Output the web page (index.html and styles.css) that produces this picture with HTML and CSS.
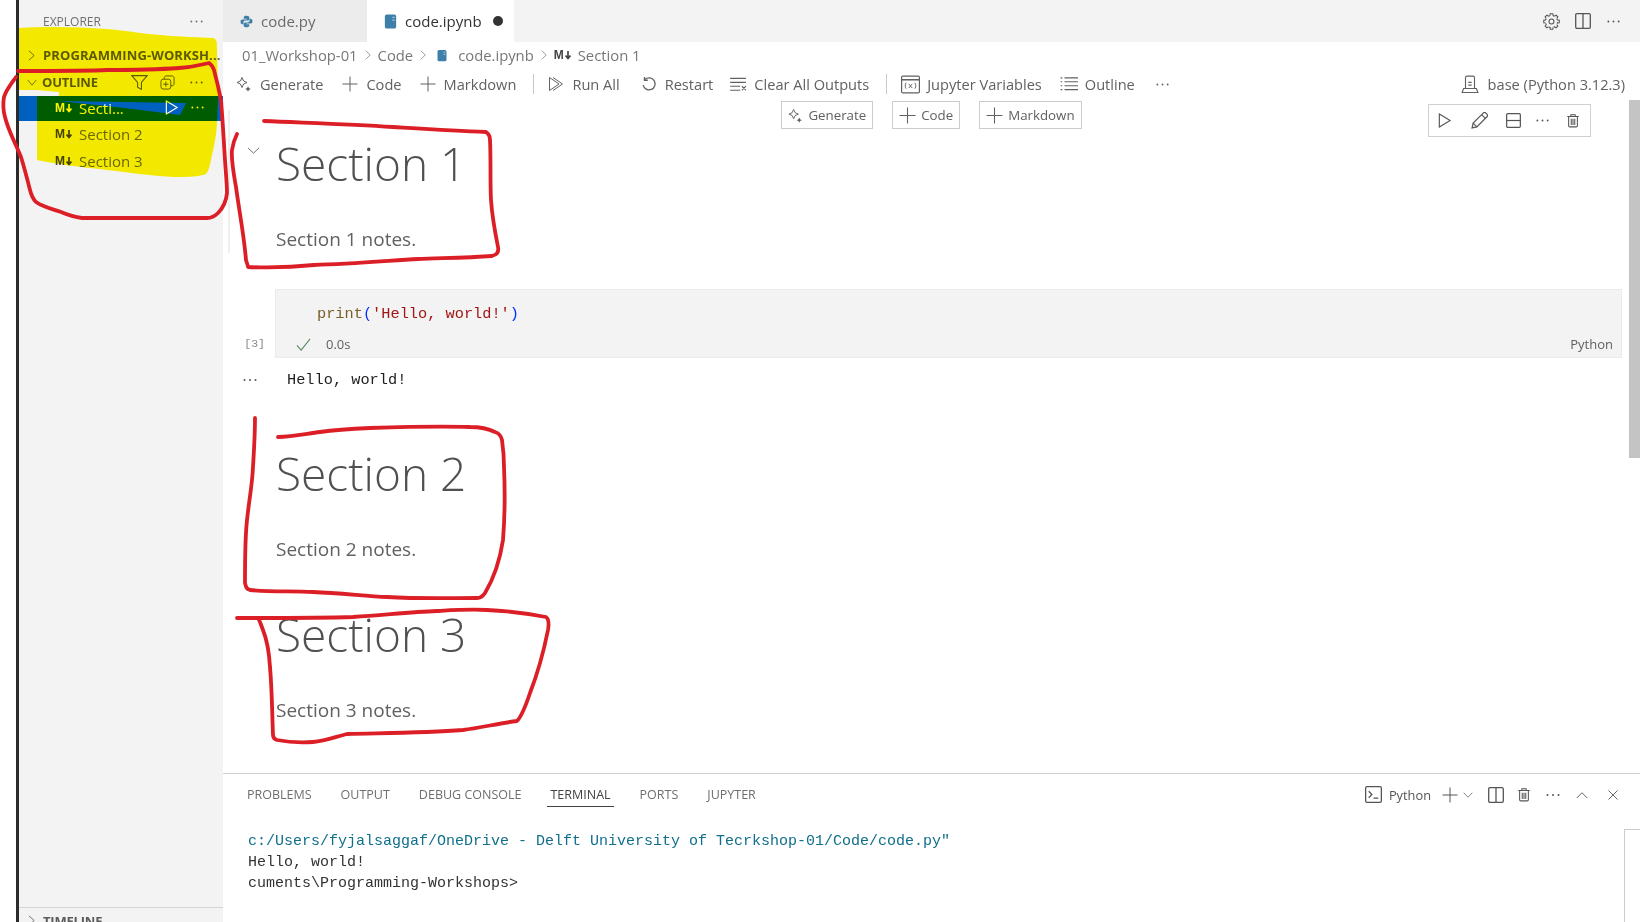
FILE: index.html
```html
<!DOCTYPE html>
<html lang="en">
<head>
<meta charset="utf-8">
<title>code.ipynb</title>
<link rel="stylesheet" href="styles.css">
</head>
<body>
<svg class="sprite" aria-hidden="true">
  <symbol id="dots" viewBox="0 0 16 16"><g class="solid"><circle cx="2.5" cy="8" r="1"/><circle cx="8" cy="8" r="1"/><circle cx="13.5" cy="8" r="1"/></g></symbol>
  <symbol id="plus" viewBox="0 0 16 16"><path d="M8 .5v15M.5 8h15"/></symbol>
  <symbol id="spark" viewBox="0 0 16 16"><path d="M6 1.5 7.6 5 11 6.5 7.6 8 6 11.5 4.4 8 1 6.5 4.4 5Z"/><path class="solid" d="M12 10.2l.9 1.900 1.900.9-1.900.9-.9 1.900-.9-1.900-1.900-.9 1.900-.9Z"/></symbol>
  <symbol id="runall" viewBox="0 0 16 16"><path d="M1.5 1.5 11 8l-9.500 6.500Z"/><path d="M5 1.500 14.500 8 5 14.500"/></symbol>
  <symbol id="restart" viewBox="0 0 16 16"><path d="M4 3.500A6 6 0 1 1 2.200 9" stroke-width="1.300"/><path d="M3.500 1v3.200h3.300" stroke-width="1.400"/></symbol>
  <symbol id="clear" viewBox="0 0 16 16"><path d="M1 3h14M1 6.500h14M1 10h9M1 13.500h9M11.500 10l3.500 3.500M15 10l-3.500 3.500"/></symbol>
  <symbol id="vars" viewBox="0 0 16 16"><rect x=".5" y="1" width="15" height="14" rx="1"/><path d="M.5 4h15" stroke-width="1.300"/><path d="M4.300 6.500c-1 1.500-1 3.500 0 5M11.700 6.500c1 1.500 1 3.500 0 5M6.500 7.500l3 3.500M9.500 7.500l-3 3.500" stroke-width=".8"/></symbol>
  <symbol id="outline" viewBox="0 0 16 16"><path d="M4 2.500h12M4 6h12M4 9.500h12M4 13h12"/><path d="M.5 2.500h1.500M.5 6h1.500M.5 9.500h1.500M.5 13h1.500"/></symbol>
  <symbol id="kernel" viewBox="0 0 16 16"><path d="M4 12V2.500C4 1.500 4.500 1 5.500 1h5c1 0 1.500.5 1.500 1.500V12M6.500 6.500h3M6.500 9h3"/><path d="M2.300 12h11.400l1.300 3.500H1Z"/></symbol>
  <symbol id="gear" viewBox="0 0 16 16"><circle cx="8" cy="8" r="2.300"/><g id="gearT"><path d="M6.500 2.500 6.800.7h2.400l.3 1.800"/></g><use href="#gearT" transform="rotate(45 8 8)"/><use href="#gearT" transform="rotate(90 8 8)"/><use href="#gearT" transform="rotate(135 8 8)"/><use href="#gearT" transform="rotate(180 8 8)"/><use href="#gearT" transform="rotate(225 8 8)"/><use href="#gearT" transform="rotate(270 8 8)"/><use href="#gearT" transform="rotate(315 8 8)"/><circle cx="8" cy="8" r="5.700" stroke-dasharray="1.480 3" stroke-dashoffset="-.75"/></symbol>
  <symbol id="split" viewBox="0 0 16 16"><rect x=".7" y=".7" width="14.600" height="14.600" rx="1.200" stroke-width="1.300"/><path d="M8 .7v14.600" stroke-width="1.300"/></symbol>
  <symbol id="hsplit" viewBox="0 0 16 16"><rect x=".7" y=".7" width="14.600" height="14.600" rx="1.200" stroke-width="1.300"/><path d="M.7 8h14.600" stroke-width="1.300"/></symbol>
  <symbol id="play" viewBox="0 0 16 16"><path d="M2.500 1 14 8 2.500 15Z" stroke-width="1.200"/></symbol>
  <symbol id="pencil" viewBox="0 0 16 16"><path d="M1 15l1-4.500L11.500 1c.8-.7 1.800-.7 2.500 0l1 1c.7.700.7 1.700 0 2.500L5.500 14Z" stroke-width="1.100"/><path d="M2 10.500 5.500 14M10 2.500l3.500 3.500" stroke-width="1.100"/></symbol>
  <symbol id="trash" viewBox="0 0 16 16"><path d="M1.500 3.500h13M5.500 3.500V1.500h5v2M3 3.500v10.500c0 .8.500 1.300 1.300 1.300h7.400c.8 0 1.300-.5 1.300-1.300V3.500M6 6v7M8 6v7M10 6v7" stroke-width="1.200"/></symbol>
  <symbol id="check" viewBox="0 0 16 16"><path d="M1 9l4.500 5L15 2" stroke-width="1.200"/></symbol>
  <symbol id="down" viewBox="1 4 14 8" preserveAspectRatio="none"><path d="M2 5l6 6 6-6"/></symbol>
  <symbol id="right" viewBox="4 1 8 14" preserveAspectRatio="none"><path d="M5 2l6 6-6 6"/></symbol>
  <symbol id="up" viewBox="0 0 16 16"><path d="M1 12l7-7 7 7" stroke-width="1.200"/></symbol>
  <symbol id="close" viewBox="0 0 16 16"><path d="M2 2l12 12M14 2 2 14" stroke-width="1.200"/></symbol>
  <symbol id="term" viewBox="0 0 16 16"><rect x=".6" y=".6" width="14.800" height="14.800" rx="1.300" stroke-width="1.200"/><path d="M3.500 5l3 3-3 3M8 11.500h4.500" stroke-width="1.200"/></symbol>
  <symbol id="filter" viewBox="0 0 16 16"><path d="M.8 1.500h14.400L9.800 8v6.500l-3.600-2V8Z"/></symbol>
  <symbol id="copy" viewBox="0 0 16 16"><rect x="1" y="4.500" width="10.500" height="10.500" rx="2.500"/><path d="M4.500 4.500V3c0-1 .8-2 2-2H13c1 0 2 1 2 2v6.500c0 1.200-1 2-2 2h-1.500M6.200 7v5.500M3.500 9.800H9"/></symbol>
  <symbol id="py" viewBox="0 0 16 16"><g class="solid brand"><path d="M8 .8c-2.300 0-3.400.8-3.400 2.200v1.700H8.200v.7H3.100C1.600 5.400.6 6.400.6 8.300s.9 3 2.300 3h1.300V9.300c0-1.300 1.100-2.400 2.400-2.400h3c1.100 0 1.900-.9 1.900-2V3C11.500 1.700 10.200.8 8 .8Z"/><path d="M8 15.200c2.300 0 3.400-.8 3.400-2.200v-1.700H7.800v-.7h5.100c1.500 0 2.500-1 2.500-2.900s-.9-3-2.300-3h-1.300v2c0 1.300-1.100 2.400-2.400 2.400h-3c-1.100 0-1.900.9-1.900 2V13c0 1.300 1.300 2.200 3.500 2.200Z"/></g></symbol>
  <symbol id="nb" viewBox="0 0 16 16"><rect class="solid brand" x="2" y=".5" width="12" height="15" rx="2"/><path class="lightline" d="M10 3.500h2.500M10 6.500h2.500"/></symbol>
  <symbol id="mdarrow" viewBox="0 0 6 10"><path d="M3 1v7.500M.5 5.500 3 8.500l2.500-3" stroke-width="1.700"/></symbol>
</svg>

<div class="app">
  <div class="gutter-bar"></div>

  <aside class="sidebar">
    <div class="side-title"><span>EXPLORER</span><svg class="ic i15"><use href="#dots"/></svg></div>
    <div class="side-sec first"><svg class="ic cr"><use href="#right"/></svg><span class="side-name">PROGRAMMING-WORKSH...</span></div>
    <div class="side-sec outline-head">
      <svg class="ic cd"><use href="#down"/></svg><span class="side-name grow">OUTLINE</span>
      <svg class="ic i17"><use href="#filter"/></svg><svg class="ic i15 copy"><use href="#copy"/></svg><svg class="ic i15"><use href="#dots"/></svg>
    </div>
    <div class="tree-row selected"><span class="md-glyph">M<svg class="ic mdar"><use href="#mdarrow"/></svg></span><span class="grow">Secti...</span><svg class="ic i15"><use href="#play"/></svg><svg class="ic i15 rowdots"><use href="#dots"/></svg></div>
    <div class="tree-row"><span class="md-glyph">M<svg class="ic mdar"><use href="#mdarrow"/></svg></span><span>Section 2</span></div>
    <div class="tree-row"><span class="md-glyph">M<svg class="ic mdar"><use href="#mdarrow"/></svg></span><span>Section 3</span></div>
    <div class="side-fill"></div>
    <div class="side-sec timeline"><svg class="ic cr"><use href="#right"/></svg><span class="side-name">TIMELINE</span></div>
  </aside>

  <main class="main">
    <div class="tabs">
      <div class="tab t-py"><svg class="ic i13"><use href="#py"/></svg><span>code.py</span></div>
      <div class="tab t-nb active"><svg class="ic i15 nbicon"><use href="#nb"/></svg><span>code.ipynb</span><i class="dirty"></i></div>
      <div class="tabs-actions">
        <svg class="ic i17"><use href="#gear"/></svg><svg class="ic i16"><use href="#split"/></svg><svg class="ic i15"><use href="#dots"/></svg>
      </div>
    </div>

    <div class="crumbs">
      <span>01_Workshop-01</span><svg class="ic cs"><use href="#right"/></svg>
      <span>Code</span><svg class="ic cs"><use href="#right"/></svg>
      <svg class="ic i13 crumb-nb"><use href="#nb"/></svg><span>code.ipynb</span><svg class="ic cs"><use href="#right"/></svg>
      <span class="md-glyph">M<svg class="ic mdar"><use href="#mdarrow"/></svg></span><span>Section 1</span>
    </div>

    <div class="toolbar">
      <div class="tool w-gen"><svg class="ic i16"><use href="#spark"/></svg><span>Generate</span></div>
      <div class="tool w-code"><svg class="ic i16"><use href="#plus"/></svg><span>Code</span></div>
      <div class="tool"><svg class="ic i16"><use href="#plus"/></svg><span>Markdown</span></div>
      <i class="tool-sep"></i>
      <div class="tool w-run"><svg class="ic i16"><use href="#runall"/></svg><span>Run All</span></div>
      <div class="tool w-res"><svg class="ic i16"><use href="#restart"/></svg><span>Restart</span></div>
      <div class="tool narrow"><svg class="ic i18"><use href="#clear"/></svg><span>Clear All Outputs</span></div>
      <i class="tool-sep"></i>
      <div class="tool narrow w-var"><svg class="ic i19"><use href="#vars"/></svg><span>Jupyter Variables</span></div>
      <div class="tool narrow w-out"><svg class="ic i18"><use href="#outline"/></svg><span>Outline</span></div>
      <svg class="ic i15"><use href="#dots"/></svg>
      <div class="tool kernel"><svg class="ic i18"><use href="#kernel"/></svg><span>base (Python 3.12.3)</span></div>
    </div>

    <div class="notebook">
      <div class="inserts">
        <div class="ins"><svg class="ic i15"><use href="#spark"/></svg><span>Generate</span></div>
        <div class="ins"><svg class="ic i17"><use href="#plus"/></svg><span>Code</span></div>
        <div class="ins"><svg class="ic i17"><use href="#plus"/></svg><span>Markdown</span></div>
      </div>

      <div class="cell-actions">
        <svg class="ic i15"><use href="#play"/></svg><svg class="ic i17 act-pen"><use href="#pencil"/></svg><svg class="ic i15 act-split"><use href="#hsplit"/></svg><svg class="ic i15 act-dots"><use href="#dots"/></svg><svg class="ic i14 act-trash"><use href="#trash"/></svg>
      </div>
      <div class="focus-bar"></div>
      <div class="scroll-thumb"></div>

      <section class="md s1">
        <div class="cell-gutter"><svg class="ic collapse"><use href="#down"/></svg></div>
        <div class="md-body"><h1>Section 1</h1><p>Section 1 notes.</p></div>
      </section>

      <div class="code-row">
        <div class="cell-gutter count">[3]</div>
        <div class="code-cell">
          <div class="code"><span class="fn">print</span><span class="br">(</span><span class="str">'Hello, world!'</span><span class="br">)</span></div>
          <div class="status"><svg class="ic i15 ok"><use href="#check"/></svg><span class="time">0.0s</span><span class="lang">Python</span></div>
        </div>
      </div>
      <div class="output-row">
        <div class="cell-gutter outdots"><svg class="ic i16"><use href="#dots"/></svg></div>
        <pre class="output">Hello, world!</pre>
      </div>

      <section class="md s2">
        <div class="cell-gutter"></div>
        <div class="md-body"><h1>Section 2</h1><p>Section 2 notes.</p></div>
      </section>
      <section class="md s3">
        <div class="cell-gutter"></div>
        <div class="md-body"><h1>Section 3</h1><p>Section 3 notes.</p></div>
      </section>
    </div>

    <div class="panel">
      <div class="panel-head">
        <span class="ptab">PROBLEMS</span><span class="ptab">OUTPUT</span><span class="ptab">DEBUG CONSOLE</span><span class="ptab on">TERMINAL</span><span class="ptab">PORTS</span><span class="ptab">JUPYTER</span>
        <div class="panel-actions">
          <svg class="ic i17"><use href="#term"/></svg><span class="pname">Python</span>
          <svg class="ic i16"><use href="#plus"/></svg><svg class="ic pchev"><use href="#down"/></svg>
          <svg class="ic i16 a-split"><use href="#split"/></svg><svg class="ic i14 a-trash"><use href="#trash"/></svg><svg class="ic i16 a-dots"><use href="#dots"/></svg><svg class="ic i12 a-up"><use href="#up"/></svg><svg class="ic i12 a-close"><use href="#close"/></svg>
        </div>
      </div>
      <div class="terminal">
        <div class="term-text">
          <div class="cmd">c:/Users/fyjalsaggaf/OneDrive - Delft University of Tecrkshop-01/Code/code.py"</div>
          <div>Hello, world!</div>
          <div>cuments\Programming-Workshops&gt;</div>
        </div>
        <div class="term-side"></div>
      </div>
    </div>
  </main>
</div>

<svg class="markup" viewBox="0 0 1640 922" aria-hidden="true">
  <path class="hl" fill-rule="evenodd" d="M18 28C50 26 80 27 107 29C130 31 145 34 161 35C180 37 200 37 213 38C217 39 217 42 217 50L218 100L217 123C216 140 213 150 211 160C209 170 207 175 203 175C195 177 185 177 175 177C150 176 125 172 107 170C80 167 55 164 37 160L37 96H59V92L37 90H18Z M59 101L186 103L180 115L125 108Z"/>
  <g class="pen">
    <path d="M18 71C60 71 90 71 107 70C140 70 165 69 179 68C195 67 203 64 209 63C212 65 213 67 214 70C218 85 220 95 221 100C223 125 224 145 225 160C226 175 227 185 227 193C226 203 222 209 218 213C214 217 211 218 207 218L82 218C74 217 68 215 61 212C52 209 43 207 36 202C32 198 31 194 30 190C27 178 25 170 21 157C14 140 8 130 5 117C3 110 3 103 4 97C6 90 11 84 16 77"/>
    <path d="M264 121C310 123 350 124 393 127C425 129 455 131 486 132C489 134 490 136 490 140C491 160 490 180 491 200C492 215 495 232 498 247C499 252 497 255 492 256C465 258 440 258 418 259C385 261 350 264 314 265C295 267 270 268 248 267C247 262 246 261 246 260C244 235 239 210 236 187C233 170 231 160 232 150C233 143 235 138 237 134"/>
    <path d="M255 418C255 435 254 450 253 467C252 490 247 510 246 533C245 550 245 568 245 583C246 588 247 589 250 590C270 592 290 591 313 592C340 593 365 596 387 597C420 599 450 598 477 598C481 598 483 596 485 593C494 578 500 560 503 540C505 515 505 490 504 467C504 455 503 447 502 440C501 436 499 433 495 432C487 428 480 427 470 427C440 426 400 427 370 428C350 429 335 430 320 432C305 434 292 437 278 437"/>
    <path d="M237 618C280 618 320 618 353 617C385 615 410 612 437 611C455 610 470 609 487 610C510 611 530 614 546 617C549 619 549 624 548 630C543 655 537 675 530 693C526 705 522 716 517 721C500 723 480 728 463 730C425 733 385 733 347 734C335 737 325 741 313 742C300 743 287 742 277 740C274 739 273 737 273 735C272 710 272 690 270 667C269 650 267 640 263 630C261 625 260 621 258 618"/>
  </g>
</svg>
</body>
</html>
```

FILE: styles.css
```css
* { box-sizing: border-box; }
html, body { margin: 0; height: 100%; overflow: hidden; background: #fff; }
body { font-family: "Open Sans", "Noto Sans", sans-serif; color: #616161; }
.sprite { display: none; }

.app { display: flex; width: 1640px; height: 922px; padding-left: 16px; }
.gutter-bar { width: 3px; background: #2b2b2b; flex: none; }

/* icons */
.ic { flex: none; fill: none; stroke: currentColor; stroke-width: 1; overflow: visible; display: block; }
.solid { fill: currentColor; stroke: none; }
.brand { fill: #3d7fa8; }
.lightline { stroke: #cfe0ea; stroke-width: 1; }
.cr { width: 7px; height: 11px; }
.cd { width: 10px; height: 7px; }
.cs { width: 6px; height: 10px; margin: 0 7px; }
.pchev { width: 10px; height: 6px; margin: 0 15px 0 5px; }
.mdar { width: 6px; height: 10px; margin-left: 1px; }
.i12 { width: 12px; height: 12px; }
.i13 { width: 13px; height: 13px; }
.i14 { width: 14px; height: 15px; }
.i15 { width: 15px; height: 15px; }
.i16 { width: 16px; height: 16px; }
.i17 { width: 17px; height: 17px; }
.i18 { width: 18px; height: 18px; }
.i19 { width: 19px; height: 19px; }

/* sidebar */
.sidebar { width: 204px; flex: none; background: #f3f3f3; display: flex; flex-direction: column; overflow: hidden; }
.side-title { height: 42px; display: flex; align-items: center; justify-content: space-between; padding: 0 19px 0 24px; font-size: 12px; color: #6f6f6f; }
.side-sec { display: flex; align-items: center; height: 27px; padding-left: 9px; font-size: 13px; font-weight: 700; color: #5c5c5c; flex: none; }
.side-sec .cr { margin-right: 8px; }
.side-sec .cd { margin-right: 5px; margin-left: -1px; }
.side-sec.first { height: 26px; }
.side-name { white-space: nowrap; letter-spacing: -.2px; }
.first .side-name { letter-spacing: .1px; }
.grow { flex: 1; }
.outline-head { padding-right: 19px; height: 28px; }
.outline-head .i17 { margin-right: 12px; }
.outline-head .copy { margin-right: 14px; }
.tree-row { display: flex; align-items: center; height: 27px; padding: 0 0 2px 36px; font-size: 15px; color: #6b6b6b; flex: none; }
.tree-row.selected { background: #0060c0; color: #fff; padding-right: 18px; height: 25px; }
.rowdots { margin-left: 11px; }
.md-glyph { display: flex; align-items: center; font-family: "Liberation Sans", sans-serif; font-weight: 700; font-size: 12px; width: 24px; color: #444; flex: none; }
.tree-row.selected .md-glyph { color: #fff; }
.side-fill { flex: 1; }
.side-sec.timeline { border-top: 1px solid #d4d4d4; height: 15px; align-items: flex-start; padding-top: 4px; overflow: hidden; }
.timeline .cr { margin-top: 3px; }

/* main */
.main { flex: 1; min-width: 0; display: flex; flex-direction: column; }
.tabs { height: 42px; flex: none; background: #f3f3f3; display: flex; align-items: stretch; }
.tab { display: flex; align-items: center; font-size: 15px; }
.t-py { width: 144px; padding-left: 17px; gap: 8px; background: #ececec; color: #6b6b6b; }
.t-nb { width: 147px; padding-left: 16px; color: #333; background: #fff; }
.nbicon { margin-right: 7px; }
.dirty { width: 10px; height: 10px; border-radius: 50%; background: #333; margin-left: 11px; }
.tabs-actions { margin-left: auto; display: flex; align-items: center; gap: 15px; padding-right: 19px; color: #555; }

.crumbs { height: 26px; flex: none; display: flex; align-items: center; padding-left: 19px; font-size: 14.800px; color: #777; }
.crumb-nb { margin: 0 10px 0 3px; width: 12px; }

.toolbar { height: 32px; flex: none; display: flex; align-items: center; padding: 0 15px 0 13px; font-size: 14.600px; color: #616161; }
.tool { display: flex; align-items: center; gap: 8px; white-space: nowrap; }
.tool.narrow { gap: 7px; }
.tool-sep { width: 1px; height: 20px; background: #c8c8c8; margin: 0 14px 0 17px; }
.w-gen { margin-right: 19px; }
.w-code { margin-right: 18px; }
.w-run { margin-right: 21px; }
.w-res { margin-right: 16px; }
.w-var { margin-right: 18px; }
.w-out { margin-right: 20px; }
.tool.kernel { margin-left: auto; gap: 9px; }

/* notebook */
.notebook { flex: 1; min-height: 0; position: relative; overflow: hidden; display: flex; flex-direction: column; }
.inserts { display: flex; justify-content: center; gap: 19px; margin-top: 1px; }
.ins { height: 28px; border: 1px solid #ccc; display: flex; align-items: center; gap: 5px; padding: 0 6px; font-size: 13.300px; color: #616161; }
.cell-actions { position: absolute; left: 1205px; top: 4px; width: 163px; height: 33px; border: 1px solid #d0d0d0; display: flex; align-items: center; padding-left: 8px; color: #555; background: #fff; }
.act-pen { margin-left: 19px; }
.act-split { margin-left: 18px; }
.act-dots { margin-left: 14px; }
.act-trash { margin-left: 16px; }
.focus-bar { position: absolute; left: 5px; top: 10px; width: 2px; height: 143px; background: #efefef; }
.scroll-thumb { position: absolute; right: 0; top: 0; width: 11px; height: 358px; background: #c4c4c4; }

.md { display: flex; flex: none; }
.cell-gutter { width: 52px; flex: none; }
.collapse { width: 13px; height: 7px; margin: 12px 0 0 24px; }
.md-body { display: flex; flex-direction: column; gap: 37px; padding-left: 1px; }
.md h1 { margin: 0; height: 56px; line-height: 56px; font-size: 46px; font-weight: 300; color: #505050; }
.md p { margin: 0; height: 22px; line-height: 22px; font-size: 19px; color: #616161; }
.s1 { margin-top: 6px; }
.s2 { margin-top: 54px; }
.s3 { margin-top: 46px; }

.code-row { display: flex; flex: none; margin-top: 39px; padding-right: 18px; }
.count { display: flex; align-items: flex-end; justify-content: flex-end; padding: 0 10px 3px 0; font: 11.500px/22px "Liberation Mono", monospace; color: #8a8a8a; }
.code-cell { flex: 1; height: 69px; background: #f3f3f3; border: 1px solid #ebebeb; padding: 13px 8px 0 41px; }
.code { font: 15.300px/22px "Liberation Mono", monospace; height: 22px; }
.fn { color: #795e26; }
.br { color: #0431fa; }
.str { color: #a31515; }
.status { display: flex; align-items: center; height: 22px; margin-top: 8px; margin-left: -21px; font-size: 13px; color: #616161; }
.ok { color: #5f8a66; }
.time { margin-left: 15px; }
.lang { margin-left: auto; }

.output-row { display: flex; flex: none; margin-top: 11px; }
.outdots { padding: 3px 0 0 19px; color: #555; }
.output { margin: 0 0 0 12px; font: 15.300px/22px "Liberation Mono", monospace; color: #1f1f1f; }

/* panel */
.panel { height: 149px; flex: none; border-top: 1px solid #d0d0d0; display: flex; flex-direction: column; }
.panel-head { height: 33px; flex: none; display: flex; align-items: center; padding-left: 24px; gap: 29px; font-size: 12.500px; color: #6e6e6e; }
.ptab { height: 33px; line-height: 41px; white-space: nowrap; }
.ptab.on { color: #424242; border-bottom: 1px solid #424242; margin: 0 -3px; padding: 0 3px; }
.panel-actions { margin-left: auto; display: flex; align-items: center; padding: 8px 21px 0 0; color: #555; font-size: 12.800px; }
.pname { margin: 0 11px 0 7px; }
.a-split { margin-right: 13px; }
.a-trash { margin-right: 14px; }
.a-dots { margin-right: 15px; }
.a-up { margin-right: 19px; }

.terminal { flex: 1; min-height: 0; display: flex; }
.term-text { flex: 1; padding: 24px 0 0 25px; font: 15px/21px "Liberation Mono", monospace; color: #333; overflow: hidden; }
.term-text div { white-space: pre; }
.cmd { color: #0f6f8c; }
.term-side { width: 16px; flex: none; margin-top: 22px; border: 1px solid #ccc; border-width: 1px 0 0 1px; }

/* hand annotations drawn over the screenshot */
.markup { position: absolute; left: 0; top: 0; width: 1640px; height: 922px; pointer-events: none; }
.hl { fill: #fff500; mix-blend-mode: multiply; }
.pen { fill: none; stroke: #dc1f26; stroke-width: 3.800; stroke-linecap: round; stroke-linejoin: round; }
```
